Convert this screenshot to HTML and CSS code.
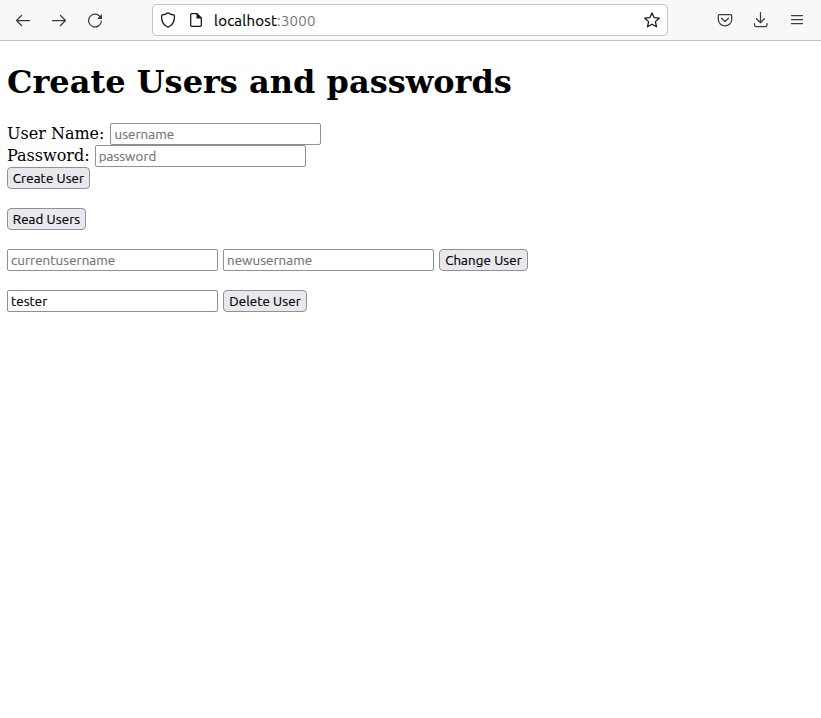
FILE: index.html
```html
<!DOCTYPE html>
<html lang="en">
<head>
<meta charset="utf-8">
<title>localhost:3000</title>
<link rel="stylesheet" href="styles.css">
</head>
<body>
<header class="toolbar">
  <nav class="nav">
    <svg class="icon" viewBox="0 0 16 16"><path d="M14.500 8.500H1.500M6.500 3.500L1.500 8.500L6.500 13.500"/></svg>
    <svg class="icon" viewBox="0 0 16 16"><path d="M1.500 8.500h13M9.500 3.500L14.500 8.500L9.500 13.500"/></svg>
    <svg class="icon" viewBox="0 0 16 16"><path d="M12.800 4.300A6.400 6.400 0 1 0 14.400 9"/><path class="solid" d="M15 2v5H10z"/></svg>
  </nav>
  <div class="address">
    <svg class="icon dark" viewBox="0 0 16 16"><path d="M8 .8C6 2.200 3.900 2.900 1.700 3.100C1 8.500 3.300 13 8 15.200C12.700 13 15 8.500 14.300 3.100C12.100 2.900 10 2.200 8 .8z"/></svg>
    <svg class="icon page dark" viewBox="0 0 16 16"><path d="M3.700 1.700H9L13.300 6v7.300q0 1-1 1H3.700q-1 0-1-1V2.700q0-1 1-1z"/><path class="solid" d="M8.500 1.500L13.500 6.500H8.500z"/></svg>
    <div class="url"><span class="host">localhost</span><span class="port">:3000</span></div>
    <svg class="icon dark" viewBox="0 0 16 16"><path d="M8 .9l2.100 4.700 5.100.6-3.800 3.400 1.100 5.200L8 12.200l-4.500 2.600 1.100-5.200L.8 6.200l5.100-.6z"/></svg>
  </div>
  <div class="actions">
    <svg class="icon" viewBox="0 0 16 16"><path d="M2.500 2.500h11q1.200 0 1.200 1.200V7.500a6.700 6.300 0 0 1-13.400 0V3.700q0-1.200 1.200-1.200zM4.500 6.200L8 9.500l3.500-3.300"/></svg>
    <svg class="icon" viewBox="0 0 16 16"><path d="M7.500 .7v10M3.500 6.700l4 4 4-4M1.500 11.500v1.500q0 1.500 1.500 1.500h9.500q1.500 0 1.500-1.500v-1.500"/></svg>
    <svg class="icon" viewBox="0 0 16 16"><path d="M2.500 3.500h11M2.500 7.500h11M2.500 11.500h11"/></svg>
  </div>
</header>
<main class="content">
  <h1>Create Users and passwords</h1>
  <div class="row user"><label for="user">User Name:</label><input id="user" placeholder="username"></div>
  <div class="row"><label for="pass">Password:</label><input id="pass" placeholder="password"></div>
  <div class="row"><button class="create">Create User</button></div>
  <div class="row spaced"><button class="read">Read Users</button></div>
  <div class="row spaced"><input placeholder="currentusername"><input placeholder="newusername"><button class="change">Change User</button></div>
  <div class="row spaced"><input value="tester"><button class="delete">Delete User</button></div>
</main>
</body>
</html>
```
FILE: styles.css
```css
* { box-sizing: border-box; }
body { margin: 0; background: #fff; color: #000; font-family: "DejaVu Serif", serif; font-size: 16px; }
.toolbar { display: flex; height: 41px; padding-top: 4px; background: #f8f8f8; border-bottom: 1px solid #c3c3c3; }
.nav { display: flex; gap: 20px; width: 152px; padding: 8px 0 0 15px; }
.icon { display: block; flex: none; width: 16px; height: 16px; fill: none; stroke: #3b3b3b; stroke-width: 1.25; stroke-linecap: round; stroke-linejoin: round; }
.dark { stroke: #15141a; }
.dark .solid { fill: #15141a; }
.solid { fill: #3b3b3b; stroke: none; }
.address { display: flex; align-items: center; width: 516px; height: 32px; padding: 0 7px; background: #fff; border: 1px solid #c3c3c3; border-radius: 4px; }
.page { margin-left: 12px; }
.url { flex: 1; margin-left: 10px; padding-top: 1px; font: 15px/20px Ubuntu, "Noto Sans", sans-serif; letter-spacing: .22px; white-space: nowrap; }
.host { -webkit-text-stroke: .2px; }
.port { color: #777; }
.actions { display: flex; gap: 20px; padding: 8px 0 0 49px; }
.content { padding: 0 7px; }
h1 { margin: 22px 0; font-size: 32px; line-height: 38px; font-weight: bold; }
.row { display: flex; gap: 5px; height: 22px; line-height: 21px; }
.user { gap: 6px; }
.spaced { margin-top: 19px; }
input, button { height: 22px; margin: 0; border: 1px solid #8f8f9d; font: 13.333px/18px Ubuntu, "Noto Sans", sans-serif; color: #000; -webkit-text-stroke: .2px; }
input { width: 211px; padding: 1px 3px; border-radius: 2px; background: #fff; letter-spacing: .07px; }
input::placeholder { color: #757575; opacity: 1; }
button { padding: 1px 0 0; border-radius: 4px; background: #e9e9ed; text-align: center; white-space: nowrap; letter-spacing: .1px; }
.create { width: 83px; }
.read { width: 79px; }
.change { width: 89px; }
.delete { width: 84px; }
```
